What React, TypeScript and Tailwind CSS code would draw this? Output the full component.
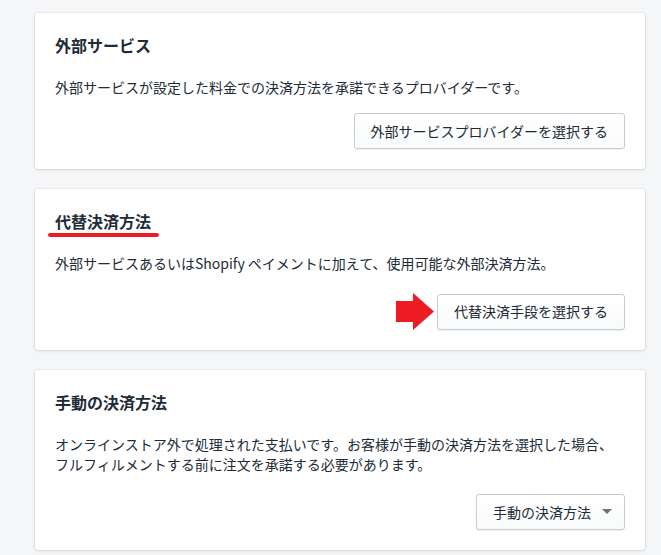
import React from 'react';

const cardClass =
  'bg-white rounded-[3px] px-5 pt-5 pb-5 shadow-[0_0_0_1px_rgba(63,63,68,0.05),0_1px_3px_0_rgba(63,63,68,0.15)]';

const buttonClass =
  'h-[36px] inline-flex items-center rounded-[3px] border border-[#c4cdd5] bg-gradient-to-b from-white to-[#f9fafb] px-4 text-[14px] text-[#212b36] shadow-[0_1px_0_0_rgba(22,29,37,0.05)]';

function RedArrow() {
  return (
    <svg width="38" height="37" viewBox="0 0 38 37" className="mr-[3px]">
      <polygon points="0,8 17,8 17,0 38,18.5 17,37 17,29 0,29" fill="#ed1c24" />
    </svg>
  );
}

export default function App() {
  return (
    <div
      className="min-h-screen bg-[#f4f6f8] pt-[13px] pl-[35px] pr-[16px]"
      style={{ fontFamily: '"Noto Sans CJK JP", "Noto Sans", sans-serif' }}
    >
      <div className="flex w-[610px] flex-col gap-5">
        {/* external services */}
        <div className={cardClass}>
          <h2 className="text-[16px] font-semibold leading-6 text-[#212b36]">外部サービス</h2>
          <p className="mt-5 text-[14px] leading-5 text-[#212b36]">
            外部サービスが設定した料金での決済方法を承諾できるプロバイダーです。
          </p>
          <div className="mt-4 flex justify-end">
            <button className={buttonClass}>外部サービスプロバイダーを選択する</button>
          </div>
        </div>

        {/* alternative payment methods */}
        <div className={cardClass}>
          <div className="relative inline-block">
            <h2 className="text-[16px] font-semibold leading-6 text-[#212b36]">代替決済方法</h2>
            <span className="absolute left-[-7px] top-[24px] h-[4px] w-[111px] rounded-full bg-[#ed1c24]" />
          </div>
          <p className="mt-5 text-[14px] leading-5 text-[#212b36]">
            外部サービスあるいはShopify ペイメントに加えて、使用可能な外部決済方法。
          </p>
          <div className="mt-5 flex items-center justify-end">
            <RedArrow />
            <button className={buttonClass}>代替決済手段を選択する</button>
          </div>
        </div>

        {/* manual payment methods */}
        <div className={cardClass}>
          <h2 className="text-[16px] font-semibold leading-6 text-[#212b36]">手動の決済方法</h2>
          <p className="mt-5 text-[14px] leading-5 text-[#212b36]">
            オンラインストア外で処理された支払いです。お客様が手動の決済方法を選択した場合、
            <br />
            フルフィルメントする前に注文を承諾する必要があります。
          </p>
          <div className="mt-5 flex justify-end">
            <button className={buttonClass + ' pr-3'}>
              手動の決済方法
              <svg width="10" height="6" viewBox="0 0 10 6" className="ml-[11px]">
                <polygon points="0,0 10,0 5,5" fill="#637381" />
              </svg>
            </button>
          </div>
        </div>
      </div>
    </div>
  );
}
